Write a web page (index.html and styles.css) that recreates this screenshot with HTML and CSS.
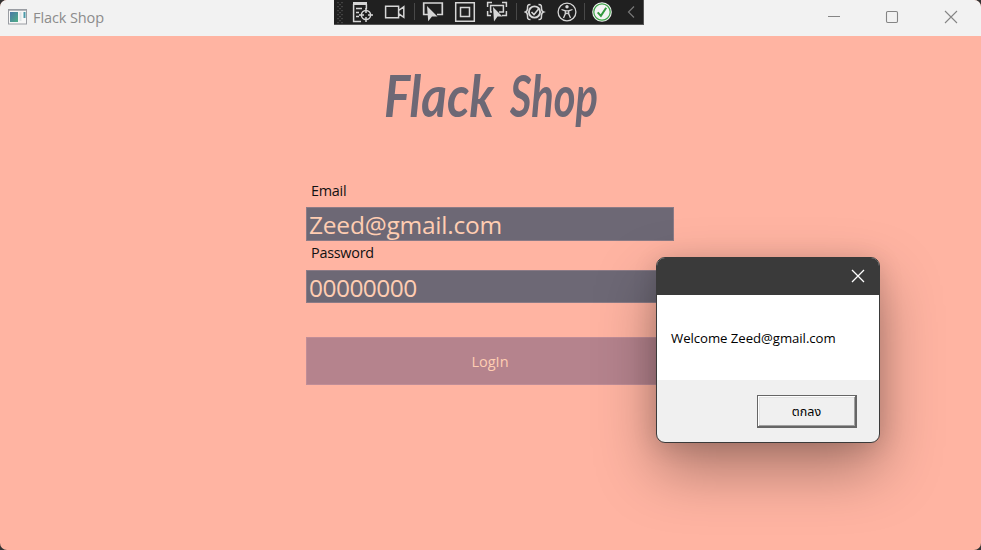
FILE: index.html
```html
<!DOCTYPE html>
<html lang="en">
<head>
<meta charset="utf-8">
<title>Flack Shop</title>
<link rel="stylesheet" href="styles.css">
</head>
<body>
<div class="window">
  <header class="titlebar">
    <svg class="app-icon" width="19" height="16" viewBox="0 0 19 16">
      <defs>
        <linearGradient id="pic" x1="0" y1="0" x2="1" y2="1"><stop offset="0" stop-color="#4a78a8"/><stop offset="1" stop-color="#4fae86"/></linearGradient>
      </defs>
      <rect x=".5" y=".5" width="18" height="14.5" fill="#f7f7f7" stroke="#9a9da3"/>
      <path d="M1 1.5h17" stroke="#b4b6bb"/>
      <rect x="2" y="3" width="8" height="10" fill="url(#pic)"/>
      <path d="M12.5 3v9" stroke="#dfe5e7" stroke-width="2"/>
      <path d="M16.5 3v6" stroke="#4b9aa9" stroke-width="2"/>
    </svg>
    <span class="app-name">Flack Shop</span>
    <svg class="controls" width="136" height="16" viewBox="0 0 136 16" fill="none" stroke="#858585" stroke-width="1.1">
      <path d="M4 7.5h12"/>
      <rect x="62.5" y="2.5" width="11" height="11" rx="1.2"/>
      <path d="M121 2l12 12M133 2l-12 12"/>
    </svg>
  </header>

  <main class="page">
    <h1 class="brand">
      <svg width="240" height="104" viewBox="0 0 240 104"><text class="brand-text" x="13" y="69" textLength="110" lengthAdjust="spacingAndGlyphs">Flack</text><text class="brand-text" x="139" y="69" textLength="88" lengthAdjust="spacingAndGlyphs">Shop</text></svg>
    </h1>
    <form class="login">
      <label class="label label-email">Email</label>
      <div class="field field-email">Zeed@gmail.com</div>
      <label class="label label-password">Password</label>
      <div class="field field-password">00000000</div>
      <div class="submit">LogIn</div>
    </form>
  </main>
</div>

<div class="toolbar">
  <svg width="7" height="25" viewBox="0 0 7 25"><path d="M1 2v22M5 2v22" stroke="#555" stroke-width="1.3" stroke-dasharray="1.3 2.7"/><path d="M3 4v20" stroke="#555" stroke-width="1.3" stroke-dasharray="1.3 2.7"/></svg>
  <svg class="tool" viewBox="0 0 22 25"><path d="M1 2h14v3H1z" fill="#d6d6d6" stroke="none"/><path d="M1.6 4v17.4H9M14.4 4v5M4 8.5h6M4 12.5h3M4 16.5h3"/><circle cx="14" cy="15" r="4.6"/><path d="M14 8v5M14 17v5M7 15h5M16 15h5"/></svg>
  <svg class="tool" viewBox="0 0 22 25"><path d="M1.6 6.2h13v11.6h-13zM14.6 10.5l5.2-3.7v10.6l-5.2-3.7"/></svg>
  <i class="sep"></i>
  <svg class="tool" viewBox="0 0 22 25"><path d="M6 14.5H1.7V3h18.6v11.5H15" stroke-width="1.7"/><path d="M5 6l10.5 10.5H10l-3.8 4.7z" fill="#d6d6d6" stroke="none"/></svg>
  <svg class="tool" viewBox="0 0 22 25"><path d="M1.7 2.7h18.6v18.6H1.7zM6.5 7.5h9v9h-9z"/></svg>
  <svg class="tool" viewBox="0 0 22 25"><path d="M1.6 7V2.6H6M16 2.6h4.4V7M1.6 11v4.4H5M20.4 11v4.4H16M6 12H4.6V5.5h12.8V12H13"/><path d="M7 7l9.5 9.5h-5L8 21.5z" fill="#d6d6d6" stroke="none"/></svg>
  <i class="sep"></i>
  <svg class="tool" viewBox="0 0 22 25"><path d="M6.5 4.500c-3 0-3 1-3 4 0 2-.5 3-2 3.500 1.500.5 2 1.500 2 3.500 0 3 0 4 3 4M14.500 4.500c3 0 3 1 3 4 0 2 .5 3 2 3.500-1.500.5-2 1.500-2 3.500 0 3 0 4-3 4"/><circle cx="10.500" cy="12" r="5.600" stroke-width="1.900"/><path d="M7.500 12l2.500 2.600 4.800-5.800"/></svg>
  <svg class="tool" viewBox="0 0 22 25"><circle cx="11" cy="12" r="8.900" stroke-width="1.300"/><circle cx="11" cy="6.700" r="1.700" fill="#d6d6d6" stroke="none"/><path d="M5.500 9.500l3.800 1.300v3L7.500 18M16.500 9.500l-3.800 1.300v3l1.800 4.200M9 10.800h4M9.500 14l1.500-1 1.500 1" stroke-width="1.300"/></svg>
  <i class="sep"></i>
  <svg class="tool" viewBox="0 0 22 25"><circle cx="11" cy="12" r="9.800" fill="#f4f4f4" stroke="none"/><circle cx="11" cy="12" r="8.200" stroke="#3fa449" stroke-width="1.200"/><path d="M6.700 12.300l3.200 3.500 5.300-8" stroke="#33983e" stroke-width="2"/></svg>
  <svg class="tool" viewBox="0 0 22 25"><path d="M14 6.500L8.500 12l5.500 5.500" stroke="#777" stroke-width="1.200"/></svg>
</div>

<section class="dialog">
  <header class="dialog-bar">
    <svg width="14" height="14" viewBox="0 0 14 14" stroke="#fff" stroke-width="1.300"><path d="M1 1l12 12M13 1L1 13"/></svg>
  </header>
  <div class="dialog-body">Welcome Zeed@gmail.com</div>
  <footer class="dialog-footer"><button class="ok">ตกลง</button></footer>
</section>
</body>
</html>
```
FILE: styles.css
```css
* { box-sizing: border-box; }
body {
  margin: 0;
  width: 981px;
  height: 550px;
  overflow: hidden;
  position: relative;
  background: #333;
  font-family: "Open Sans", "Noto Sans", sans-serif;
}
.window {
  height: 550px;
  border-radius: 7px;
  overflow: hidden;
  background: #ffb4a2;
}
.titlebar {
  height: 36px;
  display: flex;
  align-items: center;
  padding: 0 21px 2px 8px;
  background: #f2f2f2;
  color: #8c8c8c;
}
.app-icon { margin-right: 6px; }
.app-name { font-size: 14.5px; letter-spacing: -0.1px; }
.controls { margin-left: auto; }

.page { display: flex; flex-direction: column; align-items: center; }
.brand { margin: 12px 0 0; height: 104px; }
.brand svg { display: block; overflow: visible; }
.brand-text {
  font: italic 700 58px Lato, cursive;
  fill: #6d6875;
}
.login { width: 368px; margin-left: -1px; display: flex; flex-direction: column; }
.label { padding-left: 5px; font-size: 14.4px; line-height: 20px; letter-spacing: -0.25px; color: #111; }
.label-email { margin-top: 29px; }
.label-password { margin-top: 2px; }
.field {
  border: 1px solid #8b7b86;
  background: #6d6875;
  color: #ffcdb2;
  padding-left: 2px;
  font-size: 24.5px;
}
.field-email { height: 34px; margin-top: 6px; line-height: 34px; letter-spacing: -0.22px; }
.field-password { height: 33px; margin-top: 7px; line-height: 33px; letter-spacing: -0.55px; }
.submit {
  height: 48px;
  margin-top: 34px;
  border: 1px solid #c08d97;
  background: #b5838d;
  color: #ffcdb2;
  font-size: 14.5px;
  line-height: 47px;
  text-align: center;
}

.toolbar {
  position: absolute;
  left: 334px;
  top: 0;
  width: 310px;
  height: 25px;
  display: grid;
  grid-template-columns: 13px 32px 32px 6px 32px 32px 32px 6px 32px 31px 5px 30px 27px;
  justify-items: center;
  background: #202020;
  border: solid #555;
  border-width: 0 1px 1px 0;
}
.tool { width: 22px; height: 25px; fill: none; stroke: #d6d6d6; stroke-width: 1.5; }
.sep { width: 1px; height: 17px; margin-top: 3px; background: #484848; }

.dialog {
  position: absolute;
  left: 656px;
  top: 257px;
  width: 224px;
  height: 186px;
  display: flex;
  flex-direction: column;
  border: 1px solid #3a3a3a;
  border-radius: 9px;
  overflow: hidden;
  background: #f0f0f0;
  box-shadow: 0 26px 60px rgba(0, 0, 0, .34), 0 3px 24px rgba(0, 0, 0, .13);
}
.dialog-bar {
  height: 37px;
  display: flex;
  justify-content: flex-end;
  align-items: center;
  padding: 0 14px 2px 0;
  background: #3a3a3a;
}
.dialog-body {
  height: 85px;
  padding-left: 14px;
  background: #fff;
  color: #000;
  font-size: 13.2px;
  letter-spacing: -0.05px;
  line-height: 86px;
  white-space: nowrap;
}
.dialog-footer { flex: 1; display: flex; justify-content: flex-end; padding: 15px 22px 0 0; }
.ok {
  width: 100px;
  height: 33px;
  padding: 2px 0 0;
  border: solid #666;
  border-width: 1px 2px 2px 1px;
  background: #f0f0f0;
  box-shadow: inset 1px 1px #fff, inset -1px -1px #a0a0a0, inset 2px 2px #e3e3e3;
  color: #000;
  font: 12.5px "Noto Sans Thai", "Tahoma", "Open Sans", sans-serif;
}
```
